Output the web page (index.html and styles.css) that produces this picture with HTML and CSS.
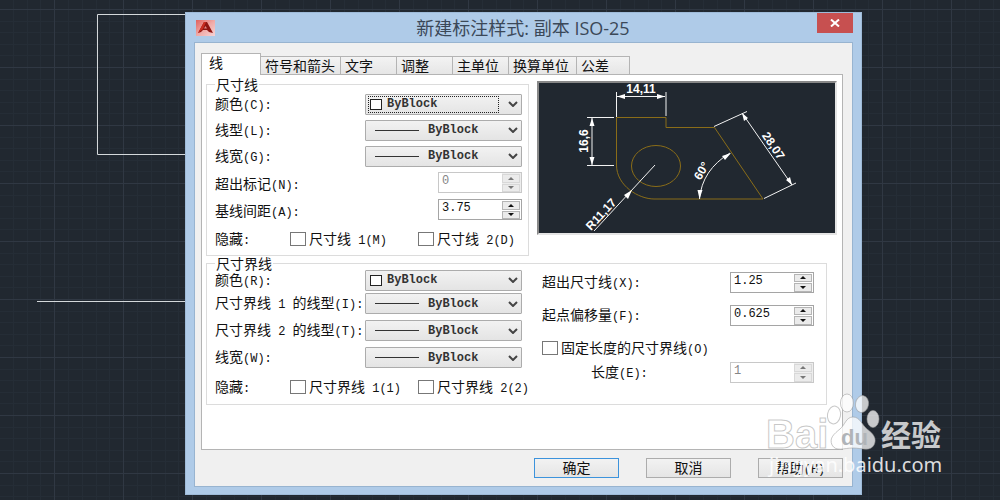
FILE: index.html
```html
<!DOCTYPE html>
<html lang="zh-CN">
<head>
<meta charset="utf-8">
<title>新建标注样式: 副本 ISO-25</title>
<link rel="stylesheet" href="styles.css">
</head>
<body>
<main class="workspace">
  <svg class="drawing" aria-hidden="true">
    <defs>
      <pattern id="grid" x="54" y="9" width="69" height="58" patternUnits="userSpaceOnUse">
        <path class="grid-minor" d="M14.5 0V58M28.5 0V58M42.5 0V58M55.5 0V58M0 12.5H69M0 23.5H69M0 35.5H69M0 46.5H69"/>
        <path class="grid-major" d="M.5 0V58M0 .5H69"/>
      </pattern>
    </defs>
    <rect width="100%" height="100%" fill="url(#grid)"/>
    <path class="entity" d="M200 14.500H97.500V154.500H200M37 301.500H200"/>
  </svg>

  <section class="dialog" role="dialog" aria-labelledby="title">
    <header class="titlebar">
      <svg class="app-icon" viewBox="0 0 19 16" aria-hidden="true">
        <defs><linearGradient id="red" x2="1" y2="1"><stop offset="0" stop-color="#e0605c"/><stop offset=".5" stop-color="#f0a9a6"/><stop offset="1" stop-color="#f6d4d6"/></linearGradient></defs>
        <rect width="19" height="16" fill="url(#red)"/>
        <path fill="#8f1511" d="M8 2h3l6 11-4-1-2-2H7l-2 2-3 1z"/>
        <path fill="#c92c20" d="M8 2h2L7 9l-5 4z"/>
        <path fill="#e08a86" d="M9.500 6l1.500 2.500H8z"/>
      </svg>
      <h1 class="title" id="title">新建标注样式: 副本 ISO-25</h1>
      <button class="close" aria-label="关闭"><svg viewBox="0 0 10 8" width="10" height="8"><path d="M1 .5l8 7M9 .5l-8 7" stroke="#fff" stroke-width="2"/></svg></button>
    </header>

    <div class="client">
      <div class="tabs" role="tablist">
        <button class="tab tab-active" role="tab" aria-selected="true">线</button>
        <button class="tab tab-l" role="tab">符号和箭头</button>
        <button class="tab" role="tab">文字</button>
        <button class="tab" role="tab">调整</button>
        <button class="tab" role="tab">主单位</button>
        <button class="tab tab-m" role="tab">换算单位</button>
        <button class="tab tab-s" role="tab">公差</button>
      </div>

      <div class="panel" role="tabpanel">
        <div class="upper">
          <fieldset class="group group-dim">
            <legend class="legend">尺寸线</legend>
            <div class="row"><label for="c1">颜色<span class="en">(C):</span></label>
              <span class="combo combo-focus"><select id="c1" class="select select-color"><option>ByBlock</option></select><i class="swatch"></i><svg class="chev" viewBox="0 0 10 6"><path d="M1 1l4 4 4-4"/></svg></span></div>
            <div class="row"><label for="c2">线型<span class="en">(L):</span></label>
              <span class="combo"><select id="c2" class="select select-line"><option>ByBlock</option></select><i class="stroke"></i><svg class="chev" viewBox="0 0 10 6"><path d="M1 1l4 4 4-4"/></svg></span></div>
            <div class="row"><label for="c3">线宽<span class="en">(G):</span></label>
              <span class="combo"><select id="c3" class="select select-line"><option>ByBlock</option></select><i class="stroke"></i><svg class="chev" viewBox="0 0 10 6"><path d="M1 1l4 4 4-4"/></svg></span></div>
            <div class="row row-spin"><label for="s1">超出标记<span class="en">(N):</span></label>
              <span class="spin spin-off"><input id="s1" class="value" value="0" disabled><span class="steps"><button class="step" disabled aria-label="增加"><i class="up"></i></button><button class="step" disabled aria-label="减少"><i class="down"></i></button></span></span></div>
            <div class="row row-spin"><label for="s2">基线间距<span class="en">(A):</span></label>
              <span class="spin"><input id="s2" class="value" value="3.75"><span class="steps"><button class="step" aria-label="增加"><i class="up"></i></button><button class="step" aria-label="减少"><i class="down"></i></button></span></span></div>
            <div class="checks"><span>隐藏<span class="en">:</span></span>
              <label class="check"><input type="checkbox" class="box">尺寸线<span class="en"> 1(M)</span></label>
              <label class="check"><input type="checkbox" class="box">尺寸线<span class="en"> 2(D)</span></label></div>
          </fieldset>

          <div class="preview">
            <svg class="sample" viewBox="540 83 296 150" role="img" aria-label="标注预览">
              <path class="part" d="M617.500 117.500H667V127.500H715.500L764 199H655C640 199 617.500 186 617.500 165Z"/>
              <ellipse class="part" cx="657" cy="166" rx="24.500" ry="20.500"/>
              <path class="dim" d="M617.500 92V117M667 92V116M618 96.500H666M588 117.500H615M588 165.500H615M593 118V165M656 165L595 231M715 126.500L748 111.500M765 198.500L797 183M743 113L793 185M700.500 199Q703 170 731 153"/>
              <path class="arrow" d="M618 96.500l8-2.500v5zM666 96.500l-8-2.500v5zM593 118l-2.500 8h5zM593 165l-2.500-8h5zM633 190l-8 5 4 4zM743 113l2 8 4-3zM793 185l-2-8-4 3zM700.500 199l-2-9h5zM732 153l-9 3 3 4z"/>
              <g class="dim-text">
                <text x="642" y="93">14,11</text>
                <text transform="translate(589 141) rotate(-90)">16,6</text>
                <text transform="translate(605 217) rotate(-47)">R11,17</text>
                <text transform="translate(706 173) rotate(-60)">60°</text>
                <text transform="translate(771 148) rotate(56)">28,07</text>
              </g>
            </svg>
          </div>
        </div>

        <fieldset class="group group-ext">
          <legend class="legend">尺寸界线</legend>
          <div class="columns">
            <div class="column">
              <div class="row row-first"><label for="c4">颜色<span class="en">(R):</span></label>
                <span class="combo"><select id="c4" class="select select-color"><option>ByBlock</option></select><i class="swatch"></i><svg class="chev" viewBox="0 0 10 6"><path d="M1 1l4 4 4-4"/></svg></span></div>
              <div class="row row-tall"><label for="c5">尺寸界线<span class="en"> 1 </span>的线型<span class="en">(I):</span></label>
                <span class="combo"><select id="c5" class="select select-line"><option>ByBlock</option></select><i class="stroke"></i><svg class="chev" viewBox="0 0 10 6"><path d="M1 1l4 4 4-4"/></svg></span></div>
              <div class="row row-tall"><label for="c6">尺寸界线<span class="en"> 2 </span>的线型<span class="en">(T):</span></label>
                <span class="combo"><select id="c6" class="select select-line"><option>ByBlock</option></select><i class="stroke"></i><svg class="chev" viewBox="0 0 10 6"><path d="M1 1l4 4 4-4"/></svg></span></div>
              <div class="row row-tall"><label for="c7">线宽<span class="en">(W):</span></label>
                <span class="combo"><select id="c7" class="select select-line"><option>ByBlock</option></select><i class="stroke"></i><svg class="chev" viewBox="0 0 10 6"><path d="M1 1l4 4 4-4"/></svg></span></div>
              <div class="checks"><span>隐藏<span class="en">:</span></span>
                <label class="check"><input type="checkbox" class="box">尺寸界线<span class="en"> 1(1)</span></label>
                <label class="check"><input type="checkbox" class="box">尺寸界线<span class="en"> 2(2)</span></label></div>
            </div>
            <div class="column column-right">
              <div class="row row-offset"><label for="s3">超出尺寸线<span class="en">(X):</span></label>
                <span class="spin"><input id="s3" class="value" value="1.25"><span class="steps"><button class="step" aria-label="增加"><i class="up"></i></button><button class="step" aria-label="减少"><i class="down"></i></button></span></span></div>
              <div class="row row-offset"><label for="s4">起点偏移量<span class="en">(F):</span></label>
                <span class="spin"><input id="s4" class="value" value="0.625"><span class="steps"><button class="step" aria-label="增加"><i class="up"></i></button><button class="step" aria-label="减少"><i class="down"></i></button></span></span></div>
              <div class="fixed">
                <div class="row row-offset"><label class="check"><input type="checkbox" class="box">固定长度的尺寸界线<span class="en">(O)</span></label></div>
                <div class="row row-offset"><label class="indent" for="s5">长度<span class="en">(E):</span></label>
                  <span class="spin spin-off"><input id="s5" class="value" value="1" disabled><span class="steps"><button class="step" disabled aria-label="增加"><i class="up"></i></button><button class="step" disabled aria-label="减少"><i class="down"></i></button></span></span></div>
              </div>
            </div>
          </div>
        </fieldset>
      </div>

      <footer class="actions">
        <button class="btn btn-default">确定</button>
        <button class="btn">取消</button>
        <button class="btn">帮助<span class="en">(H)</span></button>
      </footer>
    </div>
  </section>

  <svg class="watermark" viewBox="760 390 190 90" role="img" aria-label="Baidu 经验">
    <g class="mark">
      <text class="mark-bai" x="766" y="448">Bai</text>
      <ellipse cx="834" cy="415" rx="6.500" ry="9" transform="rotate(10 834 415)"/>
      <ellipse cx="847" cy="403" rx="6.500" ry="9"/>
      <ellipse cx="862" cy="404" rx="6.500" ry="8.500" transform="rotate(10 862 404)"/>
      <ellipse cx="873" cy="419" rx="6" ry="8.500"/>
      <path d="M853 417c7 0 9 8 14 12 7 5 10 10 7 16-4 7-12 3-21 3s-17 4-21-3c-3-7 2-11 8-16 5-4 6-12 13-12z"/>
      <text class="mark-cn" x="881" y="446">经验</text>
    </g>
    <text class="mark-du" x="841" y="445">du</text>
    <text class="mark-url" x="769" y="472">jingyan.baidu.com</text>
  </svg>
</main>
</body>
</html>
```
FILE: styles.css
```css
* { box-sizing: border-box; }

body {
  margin: 0;
  background: #212830;
  color: #111;
  font: 14px/16px "Noto Sans CJK SC", sans-serif;
}

button, input, select { font: inherit; color: inherit; margin: 0; }

.workspace {
  position: relative;
  display: flex;
  min-height: 100vh;
  padding: 12px 138px 5px 185px;
}

.drawing { position: absolute; inset: 0; width: 100%; height: 100%; }
.grid-minor { stroke: #252d36; }
.grid-major { stroke: #303843; }
.entity { fill: none; stroke: #d4d8da; }

/* Dialog window */
.dialog {
  position: relative;
  flex: 1;
  display: flex;
  flex-direction: column;
  padding: 0 8px 7px;
  border: 1px solid #9fbbd8;
  background: #afcbe8;
}
.titlebar { display: flex; align-items: center; height: 29px; }
.app-icon { width: 19px; height: 16px; margin-left: 2px; }
.title {
  flex: 1;
  margin: 0;
  padding-left: 14px;
  color: #3b4858;
  font: 18px/20px "Open Sans", "Noto Sans CJK SC", sans-serif;
  text-align: center;
}
.close {
  align-self: flex-start;
  width: 36px;
  height: 20px;
  padding: 0;
  border: 0;
  background: #c75050;
}
.close svg { display: block; margin: 0 auto; }

.client {
  flex: 1;
  display: flex;
  flex-direction: column;
  padding: 10px 9px 0 6px;
  border: 1px solid #98b4d0;
  background: #f0f0f0;
}

/* Tabs */
.tabs { display: flex; align-items: flex-end; height: 21px; }
.tab {
  width: 56px;
  height: 18px;
  padding: 0 0 2px 4px;
  border: 1px solid #b4b4b4;
  border-left-width: 0;
  border-bottom-width: 0;
  background: linear-gradient(#f3f3f3, #e6e6e6);
  line-height: 14px;
  text-align: left;
  white-space: nowrap;
}
.tab-active {
  position: relative;
  z-index: 1;
  width: 60px;
  height: 22px;
  margin-bottom: -1px;
  padding: 0 0 5px 7px;
  border-left-width: 1px;
  background: #fff;
}
.tab-l { width: 80px; }
.tab-m { width: 68px; }
.tab-s { width: 53px; }

.panel {
  flex: 1;
  padding: 2px 5px 0 4px;
  border: 1px solid #b4b4b4;
  background: #fff;
}
.upper {
  display: grid;
  grid-template-columns: minmax(0, 323fr) minmax(0, 300fr);
  gap: 8px;
}

/* Groups */
.group {
  min-width: 0;
  margin: 0;
  border: 1px solid #dcdcdc;
}
.group-dim { padding: 0 6px 0 8px; }
.group-ext { margin-right: 10px; padding: 0 12px 1px 8px; }
.legend { padding: 0 1px; line-height: 14px; }
.columns {
  display: grid;
  grid-template-columns: minmax(0, 307fr) minmax(0, 272fr);
  gap: 20px;
}
.column-right { display: flex; flex-direction: column; gap: 9px; }

.row { display: flex; align-items: center; justify-content: space-between; height: 26px; white-space: nowrap; }
.row-spin { height: 27px; }
.row-spin label { padding-top: 4px; }
.row-first { height: 20px; }
.row-tall { height: 27px; }
.row-offset { height: 24px; }
.indent { padding-left: 49px; }
.checks {
  display: grid;
  grid-template-columns: 75px 128px auto;
  align-items: center;
  justify-content: start;
  height: 32px;
  white-space: nowrap;
}
.en, .value { font-family: "Liberation Mono", monospace; font-size: 12px; white-space: pre; }

.box {
  appearance: none;
  width: 16px;
  height: 14px;
  margin-right: 3px;
  border: 1px solid #777;
  background: #fff;
  vertical-align: -2px;
}

/* Drop-downs: the field, its sample and its arrow share one grid cell */
.combo { display: grid; align-items: center; width: 157px; height: 21px; }
.combo > * { grid-area: 1 / 1; }
.select {
  appearance: none;
  width: 100%;
  height: 100%;
  border: 1px solid #acacac;
  border-radius: 1px;
  background: linear-gradient(#f2f2f2, #e4e4e4);
  font: bold 12px/16px "Liberation Mono", monospace;
  color: #333;
}
.select-color { padding: 0 0 0 21px; }
.select-line { padding: 0 0 0 62px; }
.swatch { width: 12px; height: 11px; margin-left: 5px; border: 1px solid #222; background: #fff; pointer-events: none; }
.stroke { width: 44px; height: 1px; margin-left: 10px; background: #333; pointer-events: none; }
.chev {
  justify-self: end;
  width: 10px;
  height: 6px;
  margin-right: 4px;
  fill: none;
  stroke: #444;
  stroke-width: 2;
  pointer-events: none;
}
.combo-focus::after {
  content: "";
  grid-area: 1 / 1;
  height: 15px;
  margin: 0 23px 0 3px;
  border: 1px dotted #222;
  pointer-events: none;
}

/* Number fields */
.spin { display: flex; width: 84px; height: 21px; border: 1px solid #a5a5a5; background: #fff; }
.value { flex: 1; min-width: 0; padding: 0 0 3px 3px; border: 0; background: none; }
.steps { display: grid; grid-template-rows: 1fr 1fr; gap: 1px; width: 19px; padding: 1px 1px 0 0; background: #fff; }
.step { display: grid; place-items: center; padding: 0; border: 1px solid #b5b5b5; background: #ebebeb; }
.up, .down { border: 3px solid transparent; }
.up { border-top: 0; border-bottom-color: #111; }
.down { border-bottom: 0; border-top-color: #111; }
.spin-off { border-color: #c8c8c8; }
.spin-off .value { color: #858585; }
.spin-off .steps { background: #ededed; }
.spin-off .step { border-color: #d8d8d8; }
.spin-off .up { border-bottom-color: #777; }
.spin-off .down { border-top-color: #777; }

/* Preview */
.preview { align-self: start; margin-top: 4px; border: 2px solid; border-color: #888 #e4e4e4 #e4e4e4 #888; background: #212830; }
.sample { display: block; width: 100%; }
.part { fill: none; stroke: #8a6d18; }
.dim { fill: none; stroke: #f2f2f2; }
.arrow { fill: #fff; }
.dim-text { fill: #fff; font: bold 12px "Liberation Sans", sans-serif; text-anchor: middle; }

.actions { display: flex; justify-content: flex-end; align-items: center; gap: 27px; height: 36px; }
.btn {
  width: 85px;
  height: 20px;
  padding: 0 0 2px;
  border: 1px solid #acacac;
  background: linear-gradient(#f2f2f2, #e5e5e5);
  line-height: 16px;
}
.btn-default { border-color: #3c93dc; }

/* Watermark */
.watermark { position: absolute; right: 50px; bottom: 20px; width: 190px; height: 90px; pointer-events: none; }
.mark { fill: #fff; fill-opacity: .75; stroke: #999; stroke-opacity: .55; }
.mark-bai { font: bold 40px "Liberation Sans", sans-serif; }
.mark-cn { font: bold 30px "Noto Sans CJK SC", sans-serif; stroke: none; }
.mark-du { fill: #b0b4b8; font: bold 22px "Liberation Sans", sans-serif; }
.mark-url { fill: #fff; fill-opacity: .85; font: 20px "Noto Sans", sans-serif; }
```
